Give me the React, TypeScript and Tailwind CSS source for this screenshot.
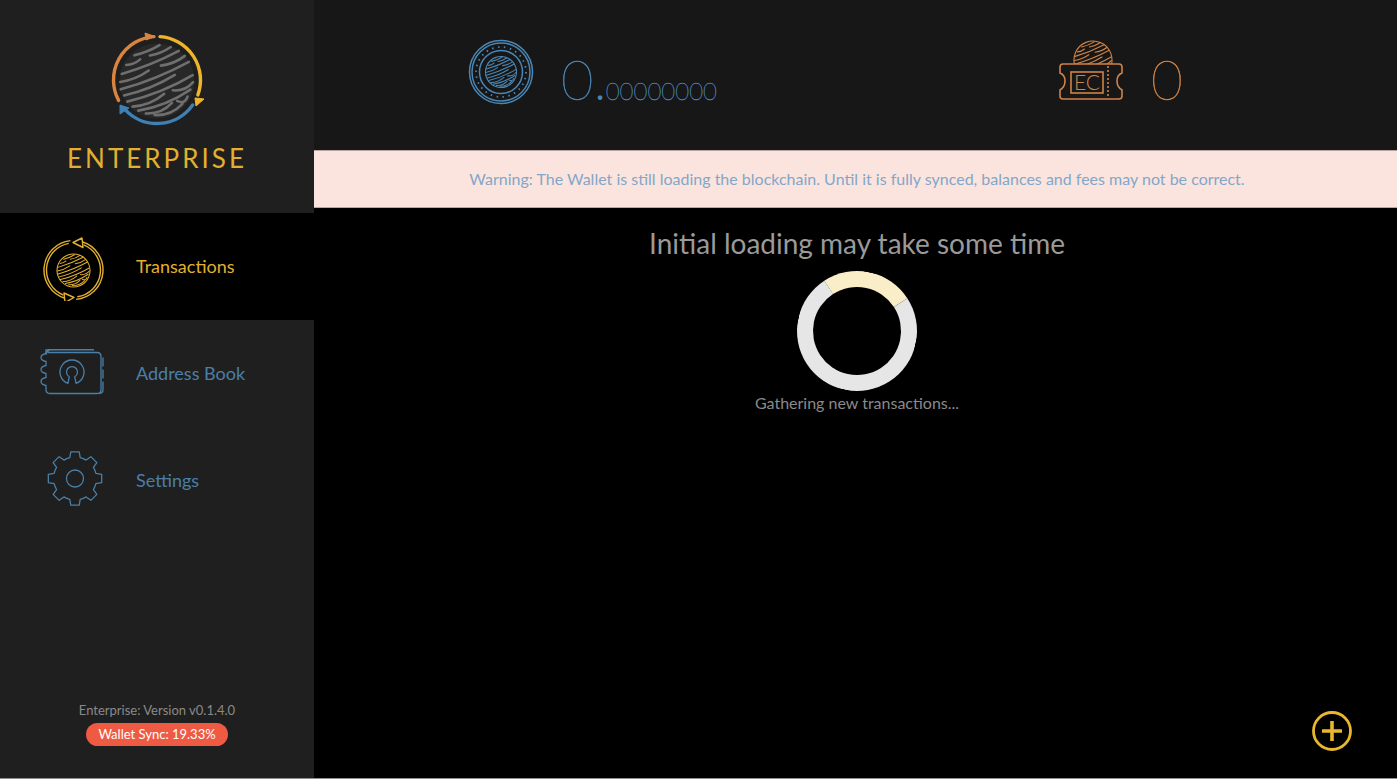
import type { ReactNode } from 'react'

const GOLD = '#e2b030'
const BLUE = '#4a7fa8'
const COPPER = '#cf8347'
const AZUL_SALDO = '#4a86b4'

// bandas do globo, em coordenadas de um círculo de raio 1
const FAIXAS: [number, number, number][] = [
  [-0.84, -0.3, 0.42],
  [-0.68, -0.6, -0.2],
  [-0.68, 0.08, 0.68],
  [-0.5, -0.8, 0.84],
  [-0.31, -0.92, -0.1],
  [-0.31, 0.25, 0.94],
  [-0.12, -0.98, 0.98],
  [0.07, -0.96, 0.5],
  [0.26, -0.94, 0.94],
  [0.44, -0.86, 0.05],
  [0.44, 0.3, 0.88],
  [0.6, -0.76, 0.74],
  [0.75, -0.6, 0.15],
  [0.75, 0.3, 0.6],
  [0.88, -0.4, 0.4],
]

function Globo({
  cx,
  cy,
  r,
  cor,
  traco,
  fundo = 'none',
  contorno = false,
}: {
  cx: number
  cy: number
  r: number
  cor: string
  traco: number
  fundo?: string
  contorno?: boolean
}) {
  return (
    <g transform={`translate(${cx} ${cy}) rotate(-22) scale(${r})`} fill="none" stroke={cor} strokeLinecap="round">
      <circle r={1} fill={fundo} stroke={contorno ? cor : 'none'} strokeWidth={traco / r} />
      {FAIXAS.map(([y, a, b], i) => {
        // as linhas de baixo curvam um pouco mais, como latitudes
        const curva = 0.03 + 0.05 * (y + 1)
        return <path key={i} d={`M${a} ${y - curva / 2}Q${(a + b) / 2} ${y + curva} ${b} ${y - curva / 2}`} strokeWidth={traco / r} />
      })}
    </g>
  )
}

function polar(cx: number, cy: number, r: number, graus: number) {
  const a = ((graus - 90) * Math.PI) / 180
  return [cx + r * Math.cos(a), cy + r * Math.sin(a)]
}

function arco(cx: number, cy: number, r: number, de: number, ate: number) {
  const [x1, y1] = polar(cx, cy, r, de)
  const [x2, y2] = polar(cx, cy, r, ate)
  return `M${x1} ${y1}A${r} ${r} 0 ${ate - de > 180 ? 1 : 0} 1 ${x2} ${y2}`
}

function Logo() {
  return (
    <svg width="100" height="100" viewBox="106 30 100 100" className="block" fill="none">
      <Globo cx={156} cy={81} r={37.5} cor="#6f6f6f" traco={2.6} fundo="#282828" />
      <path d={arco(156, 80, 43.5, 4, 110)} stroke="#eeb52c" strokeWidth={3.4} strokeLinecap="round" />
      <path d="M194 98l9 1-8 7z" fill="#eeb52c" stroke="#eeb52c" strokeLinejoin="round" />
      <path d={arco(156, 80, 43.5, 125, 228)} stroke="#3f80b5" strokeWidth={3.4} strokeLinecap="round" />
      <path d="M119 105l0 9 9-6z" fill="#3f80b5" stroke="#3f80b5" strokeLinejoin="round" />
      <path d={arco(156, 80, 43.5, 242, 356)} stroke="#d9843f" strokeWidth={3.4} strokeLinecap="round" />
      <path d="M144 33l10 3.500-9 3.500z" fill="#d9843f" stroke="#d9843f" strokeLinejoin="round" />
    </svg>
  )
}

function IconeTransacoes() {
  return (
    <svg width="70" height="68" viewBox="39 232.5 70 68" fill="none" stroke={GOLD} strokeWidth={1.4}>
      <Globo cx={73.5} cy={270} r={16.5} cor={GOLD} traco={1} contorno />
      <path d={arco(73.5, 269.5, 29.5, 197, 354)} />
      <path d={arco(73.5, 269.5, 27, 202, 350)} />
      <path d={arco(73.5, 269.5, 29.5, 17, 175)} />
      <path d={arco(73.5, 269.5, 27, 22, 172)} />
      <path d="M73 242l9-4.500 1 9.500zM74 297l-9 5-1-9.500z" strokeLinejoin="round" />
    </svg>
  )
}

function IconeAgenda() {
  return (
    <svg width="70" height="50" viewBox="39 348.5 70 50" fill="none" stroke={BLUE} strokeWidth={1.3}>
      <path d="M48 352h49q4 0 4 4v33q0 4-4 4H50q-4 0-4-4v-4q-5-1-5-4t5-4v-4q-5-1-5-4t5-4v-4q-5-1-5-4t5-4v-3q0-4 2-4z" />
      <path d="M46 354q0-5 5-5h43" strokeWidth={1.8} />
      <path d="M103 357v9M103 369v9M103 381v8q0 4-4 4" />
      <path d="M67.900 382.800A12 12 0 1 1 76.100 382.800L74.750 376.300A5.500 5.500 0 1 0 69.250 376.300Z" strokeLinejoin="round" />
    </svg>
  )
}

// engrenagem de 8 dentes gerada por ângulo
const ENGRENAGEM = Array.from({ length: 8 }, (_, i) => {
  const base = i * 45
  const p = [
    polar(75, 478, 21.5, base - 14),
    polar(75, 478, 27, base - 9),
    polar(75, 478, 27, base + 9),
    polar(75, 478, 21.5, base + 14),
  ]
  const prox = polar(75, 478, 21.5, base + 31)
  return `${i === 0 ? 'M' : 'L'}${p[0]}L${p[1]}L${p[2]}L${p[3]}A21.500 21.500 0 0 1 ${prox}`
}).join('') + 'Z'

function IconeConfig() {
  return (
    <svg width="70" height="60" viewBox="39 450.5 70 60" fill="none" stroke={BLUE} strokeWidth={1.3}>
      <path d={ENGRENAGEM} strokeLinejoin="round" />
      <circle cx={75} cy={478} r={8.5} />
    </svg>
  )
}

function IconeMoeda() {
  return (
    <svg width="66" height="66" viewBox="468 39 66 66" fill="none" stroke={AZUL_SALDO} className="shrink-0">
      <circle cx={501} cy={72} r={31.5} strokeWidth={1.5} />
      <circle cx={501} cy={72} r={29} strokeWidth={1.5} />
      <circle cx={501} cy={72} r={25} strokeWidth={1.8} strokeDasharray="1.500 4.500" />
      <circle cx={501} cy={72} r={21.5} strokeWidth={1.5} />
      <Globo cx={501} cy={72} r={15.5} cor={AZUL_SALDO} traco={1.1} contorno />
    </svg>
  )
}

function IconeTicket() {
  return (
    <svg width="66" height="62" viewBox="1057 39 66 62" fill="none" stroke={COPPER} strokeWidth={1.6} className="shrink-0">
      <clipPath id="topo">
        <rect x="1070" y="38" width="44" height="26" />
      </clipPath>
      <g clipPath="url(#topo)">
        <Globo cx={1092} cy={60} r={19} cor={COPPER} traco={1.1} contorno />
      </g>
      <path d="M1062 64h56q3 0 3 3v6q-5 2-5 8t5 9v6q0 3-3 3h-56q-3 0-3-3v-6q5-3 5-9t-5-8v-6q0-3 3-3z" />
      <rect x="1070" y="72" width="32" height="21" />
      <path d="M1107 66v31" strokeDasharray="2 2" />
      <text x="1086" y="90" textAnchor="middle" fontSize="21" stroke="none" fill={COPPER} className="font-[Lato] font-light">
        EC
      </text>
    </svg>
  )
}

function ItemMenu({
  icone,
  label,
  ativo,
}: {
  icone: ReactNode
  label: string
  ativo?: boolean
}) {
  return (
    <div className={`h-[107px] flex items-center ${ativo ? 'bg-black text-[#e2b030]' : 'text-[#4a7fa8]'}`}>
      <div className="w-[136px] pl-[39px] flex items-center">{icone}</div>
      <span className="text-[18px]">{label}</span>
    </div>
  )
}

export default function App() {
  return (
    <div className="h-[779px] w-[1397px] overflow-hidden flex border-b border-[#8f8f8f] bg-black font-[Lato]">
      <aside className="w-[314px] shrink-0 bg-[#1f1f1f] flex flex-col">
        <div className="h-[213px] pt-[30px] flex flex-col items-center">
          <Logo />
          <div className="mt-[12px] text-[26px] leading-[32px] tracking-[3px] text-[#e2b030]">ENTERPRISE</div>
        </div>
        <ItemMenu ativo label="Transactions" icone={<IconeTransacoes />} />
        <ItemMenu label="Address Book" icone={<IconeAgenda />} />
        <ItemMenu label="Settings" icone={<IconeConfig />} />
        <div className="mt-auto pb-[32px] flex flex-col items-center gap-[4px]">
          <div className="text-[13px] leading-[18px] text-[#8a8a8a]">Enterprise: Version v0.1.4.0</div>
          <div className="h-[23px] w-[142px] rounded-full bg-[#ee5a42] text-[13px] leading-[23px] text-center text-white">
            Wallet Sync: 19.33%
          </div>
        </div>
      </aside>

      <main className="relative flex-1 flex flex-col min-w-0">
        <header className="h-[150px] shrink-0 bg-[#171717] flex items-start">
          <div className="w-[590px] ml-[154px] mt-[39px] flex items-start text-[#4a86b4]">
            <IconeMoeda />
            <span className="ml-[27px] mt-[8px] text-[56px] leading-[64px] font-thin [-webkit-text-stroke:0.5px_#4a86b4]">0</span>
            <span className="ml-[3px] mt-[24px] text-[30px] leading-[50px] font-bold">.</span>
            <span className="ml-[2px] mt-[34px] text-[24px] leading-[36px] font-thin [-webkit-text-stroke:0.4px_#4a86b4]">00000000</span>
          </div>
          <div className="mt-[39px] flex items-start text-[#cf8347]">
            <IconeTicket />
            <span className="ml-[27px] mt-[8px] text-[55px] leading-[64px] font-thin [-webkit-text-stroke:0.5px_#cf8347]">0</span>
          </div>
        </header>

        <div className="h-[58px] shrink-0 bg-[#fce4de] border-y border-[#b7a6a4] pl-[3px] flex items-center justify-center text-[16px] text-[#82a7c9]">
          Warning: The Wallet is still loading the blockchain. Until it is fully synced, balances and fees may not be correct.
        </div>

        <div className="pl-[3px] pt-[18px] flex flex-col items-center">
          <h1 className="text-[28px] leading-[34px] text-[#9a9a9a]">Initial loading may take some time</h1>
          <div className="mt-[11px] size-[120px] rounded-full border-[16px] border-[#e6e6e6] border-t-[#faeec8] rotate-[12deg]" />
          <div className="mt-[2px] text-[16px] leading-[20px] text-[#8a8a8a]">Gathering new transactions...</div>
        </div>

        <svg width="42" height="42" viewBox="0 0 42 42" fill="none" stroke="#e9b72e" className="absolute left-[997px] top-[710px]">
          <circle cx={21} cy={21} r={18.500} strokeWidth={2.8} />
          <path d="M11 21h20M21 11v20" strokeWidth={3.6} />
        </svg>
      </main>
    </div>
  )
}
